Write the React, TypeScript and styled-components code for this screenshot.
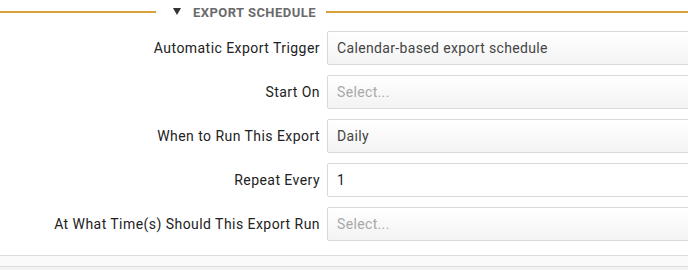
import React from 'react';
import styled, { createGlobalStyle } from 'styled-components';

const GlobalStyle = createGlobalStyle`
  html, body {
    margin: 0;
    padding: 0;
    overflow: hidden;
    background: #fff;
    font-family: Roboto, "Liberation Sans", Arial, sans-serif;
  }
`;

const Page = styled.div`
  width: 688px;
  height: 270px;
  overflow: hidden;
  display: flex;
  flex-direction: column;
`;

const SectionHeader = styled.div`
  display: flex;
  align-items: center;
  height: 24px;
`;

const Rule = styled.div<{ grow?: boolean }>`
  height: 2px;
  background: #d8a23a;
  flex: ${({ grow }) => (grow ? '1' : '0 0 156px')};
`;

const HeaderTitle = styled.div`
  display: flex;
  align-items: center;
  gap: 12px;
  padding: 0 10px 0 17px;
  font-size: 13px;
  font-weight: 700;
  letter-spacing: 0.45px;
  color: #6a6a6a;
  text-transform: uppercase;
`;

const Caret = styled.span`
  width: 0;
  height: 0;
  border-left: 4px solid transparent;
  border-right: 4px solid transparent;
  border-top: 7px solid #333;
  margin-top: -2px;
`;

const Form = styled.div`
  display: grid;
  grid-template-columns: 320px 420px;
  column-gap: 7px;
  row-gap: 10px;
  padding-top: 7px;
`;

const Label = styled.label`
  text-align: right;
  align-self: center;
  font-size: 14px;
  letter-spacing: 0.45px;
  color: #222;
`;

const Field = styled.div<{ plain?: boolean; placeholder?: boolean }>`
  box-sizing: border-box;
  height: 34px;
  display: flex;
  align-items: center;
  padding-left: 9px;
  border: 1px solid #d9d9d9;
  border-radius: 2px;
  background: ${({ plain }) =>
    plain ? '#fff' : 'linear-gradient(to bottom, #ffffff 0%, #f3f3f3 100%)'};
  font-size: 14px;
  letter-spacing: 0.35px;
  color: ${({ placeholder, plain }) =>
    placeholder ? '#a8a8a8' : plain ? '#222' : '#444'};
`;

const Footer = styled.div`
  margin-top: 14px;
  height: 10px;
  border-top: 1px solid #dcdcdc;
  border-bottom: 1px solid #dcdcdc;
  background: #fafafa;
`;

const Below = styled.div`
  flex: 1;
  background: #f3f3f3;
`;

type Row = {
  label: string;
  value: string;
  placeholder?: boolean;
  plain?: boolean;
};

const rows: Row[] = [
  { label: 'Automatic Export Trigger', value: 'Calendar-based export schedule' },
  { label: 'Start On', value: 'Select...', placeholder: true },
  { label: 'When to Run This Export', value: 'Daily' },
  { label: 'Repeat Every', value: '1', plain: true },
  { label: 'At What Time(s) Should This Export Run', value: 'Select...', placeholder: true },
];

const App: React.FC = () => (
  <>
    <GlobalStyle />
    <Page>
      <SectionHeader>
        <Rule />
        <HeaderTitle>
          <Caret />
          Export Schedule
        </HeaderTitle>
        <Rule grow />
      </SectionHeader>
      <Form>
        {rows.map((row) => (
          <React.Fragment key={row.label}>
            <Label>{row.label}</Label>
            <Field plain={row.plain} placeholder={row.placeholder}>
              {row.value}
            </Field>
          </React.Fragment>
        ))}
      </Form>
      <Footer />
      <Below />
    </Page>
  </>
);

export default App;
